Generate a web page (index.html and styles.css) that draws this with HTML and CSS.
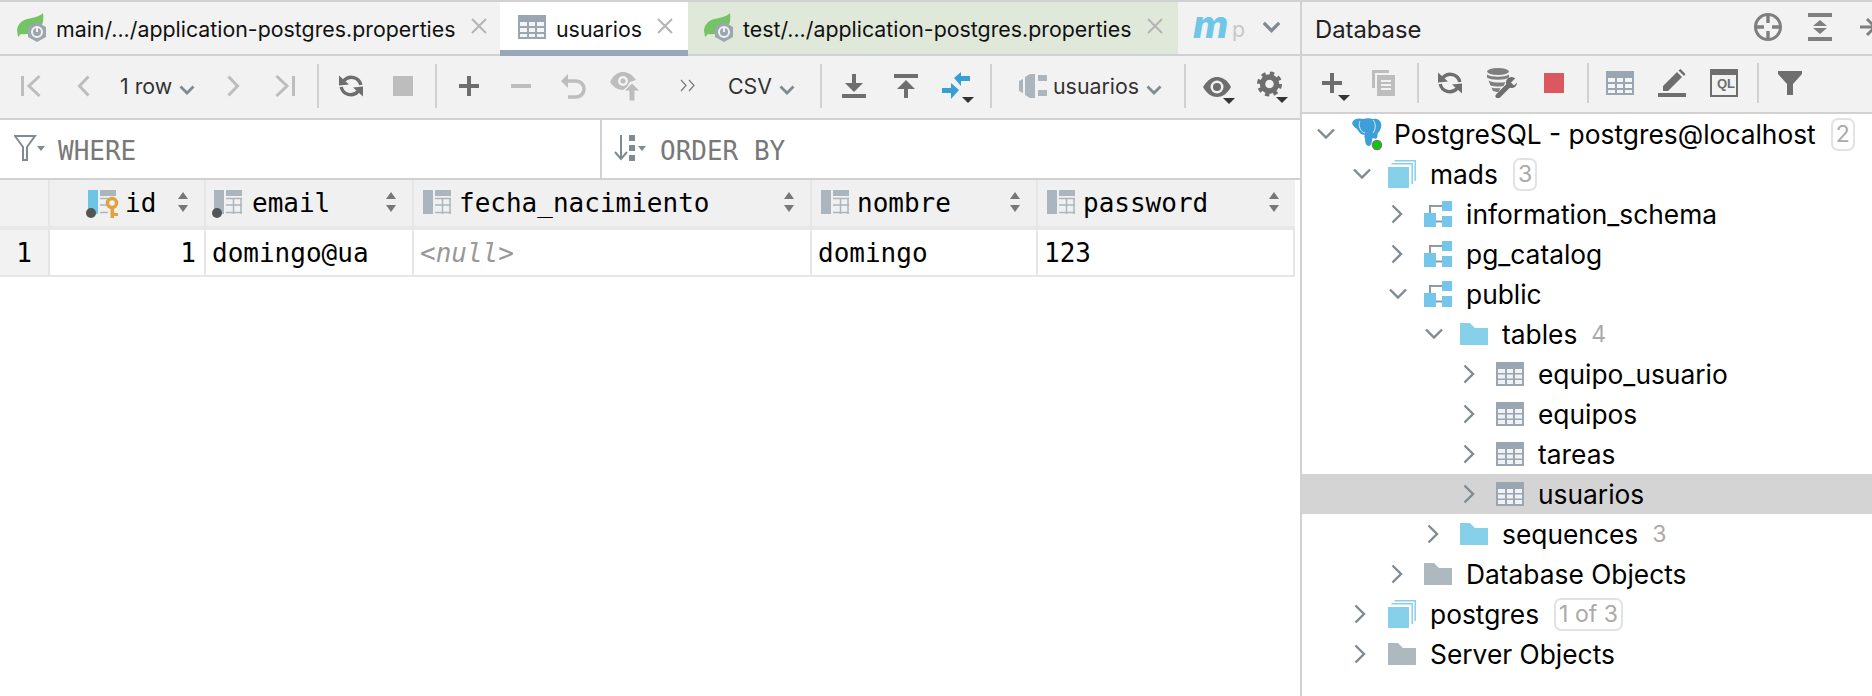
FILE: index.html
```html
<!DOCTYPE html>
<html lang="en">
<head>
<meta charset="utf-8">
<title>usuarios</title>
<link rel="stylesheet" href="styles.css">
</head>
<body>
<svg class="defs" xmlns="http://www.w3.org/2000/svg">
  <symbol id="spring" viewBox="0 0 30 28" overflow="visible">
    <path d="M0 17C1 8 9 6 15 5C19 4 23 3 26 0C27 7 26 13 21 17C15 21 8 22 4 21L1 24Z" fill="#74c365"/>
    <path d="M20 9l9 5v10l-9 5l-9-5V14z" fill="#9aa7b0"/>
    <circle cx="20" cy="19" r="5" fill="none" stroke="#f2f2f2" stroke-width="2"/>
    <path d="M20 14v5" stroke="#f2f2f2" stroke-width="2"/>
  </symbol>
  <symbol id="table" viewBox="0 0 28 24">
    <path d="M0 0h28v24H0z" fill="#9aa7b3"/>
    <path d="M2 7h7v4H2zM11 7h6v4h-6zM19 7h7v4h-7zM2 13h7v4H2zM11 13h6v4h-6zM19 13h7v4h-7zM2 19h7v3H2zM11 19h6v3h-6zM19 19h7v3h-7z" fill="#f4f4f4"/>
  </symbol>
  <symbol id="treetable" viewBox="0 0 28 24">
    <path d="M0 0h28v24H0z" fill="#9aa7b3"/>
    <path d="M2 7h7v4H2zM11 7h6v4h-6zM19 7h7v4h-7zM2 12.500h7v4H2zM11 12.500h6v4h-6zM19 12.500h7v4h-7zM2 18h7v4H2zM11 18h6v4h-6zM19 18h7v4h-7z" fill="#fff" fill-opacity=".85"/>
  </symbol>
  <symbol id="close" viewBox="0 0 16 16"><path d="M1 1l14 14M15 1L1 15" stroke="#b4b4b4" stroke-width="2" fill="none"/></symbol>
  <symbol id="chev-down" viewBox="0 0 16 10"><path d="M1.500 1.500L8 8l6.500-6.500" stroke="#7f8b91" stroke-width="2.800" fill="none"/></symbol>
  <symbol id="first" viewBox="0 0 20 24"><path d="M0 2h3v20H0z" fill="#bdbdbd"/><path d="M18.500 2L8 12l10.500 10" stroke="#bdbdbd" stroke-width="3" fill="none"/></symbol>
  <symbol id="prev" viewBox="0 0 13 22"><path d="M11.500 1.500L2.500 11l9 9.500" stroke="#bdbdbd" stroke-width="3" fill="none"/></symbol>
  <symbol id="next" viewBox="0 0 13 22"><path d="M1.500 1.500l9 9.500-9 9.500" stroke="#bdbdbd" stroke-width="3" fill="none"/></symbol>
  <symbol id="last" viewBox="0 0 20 24"><path d="M17 2h3v20h-3z" fill="#bdbdbd"/><path d="M1.500 2L12 12 1.500 22" stroke="#bdbdbd" stroke-width="3" fill="none"/></symbol>
  <symbol id="refresh" viewBox="0 0 24 24">
    <path d="M5 6.500A9.800 9.800 0 0 1 21.800 11M19 17.500A9.800 9.800 0 0 1 2.200 13" stroke="#6e6e6e" stroke-width="3.400" fill="none"/>
    <path d="M0 1.500L10 10.500 0 11.500zM24 22.500L14 13.500 24 12.500z" fill="#6e6e6e"/>
  </symbol>
  <symbol id="stop" viewBox="0 0 20 20"><path d="M0 0h20v20H0z" fill="#bdbdbd"/></symbol>
  <symbol id="plus" viewBox="0 0 20 20"><path d="M8 0h4v8h8v4h-8v8H8v-8H0V8h8z" fill="#6e6e6e"/></symbol>
  <symbol id="minus" viewBox="0 0 20 4"><path d="M0 0h20v4H0z" fill="#bdbdbd"/></symbol>
  <symbol id="undo" viewBox="0 0 26 26">
    <path d="M8 1L1 8l7 7z" fill="#bdbdbd"/>
    <path d="M7 8h9a8 8 0 0 1 0 16H8" stroke="#bdbdbd" stroke-width="3.600" fill="none"/>
  </symbol>
  <symbol id="eyeup" viewBox="0 0 30 30">
    <path d="M0 11C4 3 9 1 13 1s9 2 13 8l-6 2-3 5-4 3C8 19 3 16 0 11z" fill="#bdbdbd"/>
    <circle cx="13" cy="10" r="5" fill="#f2f2f2"/><circle cx="13" cy="10" r="2.500" fill="#bdbdbd"/>
    <path d="M22 12l8 8h-5v10h-6V20h-5z" fill="#bdbdbd" stroke="#f2f2f2"/>
  </symbol>
  <symbol id="more" viewBox="0 0 15 13"><path d="M1 1l5 5.500-5 5.500M9 1l5 5.500-5 5.500" stroke="#7a7a7a" stroke-width="1.200" fill="none"/></symbol>
  <symbol id="down" viewBox="0 0 24 24"><path d="M10 0h4v9h7l-9 9-9-9h7zM0 20h24v4H0z" fill="#6e6e6e"/></symbol>
  <symbol id="up" viewBox="0 0 24 24"><path d="M0 0h24v4H0zM12 6l9 9h-7v9h-4v-9H3z" fill="#6e6e6e"/></symbol>
  <symbol id="compare" viewBox="0 0 32 31">
    <path d="M12 6l7-6v4h9v5h-9v5z" fill="#389fd6"/>
    <path d="M17 18l-8 9v-6H0v-5h9v-5z" fill="#389fd6"/>
    <path d="M20 25h12l-6 6z" fill="#333"/>
  </symbol>
  <symbol id="plug" viewBox="0 0 28 26">
    <path d="M0 8l4-2v14l-4-2zM6 4l5-3h5v24h-5l-5-3z" fill="#aab5bd"/>
    <path d="M19 2h9v6h-9zM19 17h9v6h-9z" fill="#aab5bd"/>
  </symbol>
  <symbol id="eye" viewBox="0 0 34 27">
    <path d="M0 10C5 2 10 0 14 0s10 2 14 10c-4 7-9 10-14 10S4 17 0 10z" fill="#6e6e6e"/>
    <circle cx="14" cy="10" r="6.500" fill="#f2f2f2"/><circle cx="14" cy="10" r="4" fill="#6e6e6e"/>
    <path d="M20 21h12l-6 6z" fill="#333"/>
  </symbol>
  <symbol id="gear" viewBox="0 0 32 32">
    <circle cx="12.500" cy="13" r="7" fill="none" stroke="#6e6e6e" stroke-width="5.500"/>
    <circle cx="12.500" cy="13" r="10.500" fill="none" stroke="#6e6e6e" stroke-width="4" stroke-dasharray="4.250 4"/>
    <path d="M19 26h12l-6 6z" fill="#333"/>
  </symbol>
  <symbol id="funnel" viewBox="0 0 32 28">
    <path d="M1 1h20l-8 11v13H9V12z" fill="none" stroke="#7f8b91" stroke-width="2"/>
    <path d="M23 11h8l-4 5z" fill="#7f8b91"/>
  </symbol>
  <symbol id="sortrows" viewBox="0 0 32 28">
    <path d="M7 0v24M1 17l6 7 6-7" fill="none" stroke="#7f8b91" stroke-width="2"/>
    <path d="M15 0h6v6h-6zM15 10h6v6h-6zM15 20h6v6h-6z" fill="#7f8b91"/>
    <path d="M24 11h8l-4 5z" fill="#7f8b91"/>
  </symbol>
  <symbol id="sort" viewBox="0 0 10 20"><path d="M5 0l5 7H0zM5 20l-5-7h10z" fill="#777"/></symbol>
  <symbol id="col" viewBox="0 0 28 24">
    <path d="M0 0h10v24H0z" fill="#aab5bd"/>
    <path d="M12 0h16v6H12z" fill="#aab5bd"/>
    <path d="M12 8.500h16M12 15h16M12 22.500h16M19.500 8v16M27 8v16" stroke="#aab5bd" stroke-width="1.500" fill="none"/>
  </symbol>
  <symbol id="colfk" viewBox="0 0 30 28" overflow="visible">
    <path d="M2 0h10v24H2z" fill="#aab5bd"/>
    <path d="M14 0h16v6H14z" fill="#aab5bd"/>
    <path d="M14 8.500h16M14 15h16M14 22.500h16M21.500 8v16M29 8v16" stroke="#aab5bd" stroke-width="1.500" fill="none"/>
    <circle cx="5" cy="23" r="5" fill="#555"/>
  </symbol>
  <symbol id="colpk" viewBox="0 0 32 28" overflow="visible">
    <path d="M2 0h10v24H2z" fill="#6ec4e6"/>
    <path d="M14 0h16v6H14z" fill="#aab5bd"/>
    <path d="M14 8.500h8M14 15h8M14 22.500h8" stroke="#aab5bd" stroke-width="1.500" fill="none"/>
    <circle cx="5" cy="23" r="5" fill="#555"/>
    <circle cx="26" cy="14" r="4.500" fill="none" stroke="#e0a33c" stroke-width="3.500" transform="translate(0 -1)"/>
    <path d="M24.500 17h3.500v6h4v3h-4v2h-3.500z" fill="#e0a33c"/>
  </symbol>
  <symbol id="crosshair" viewBox="0 0 28 30">
    <circle cx="14" cy="15" r="12.500" fill="none" stroke="#7f7f7f" stroke-width="3"/>
    <path d="M14 3v8M14 19v8M2 15h8M18 15h8" stroke="#7f7f7f" stroke-width="3.400" fill="none"/>
  </symbol>
  <symbol id="expand" viewBox="0 0 24 28">
    <path d="M0 0h24v4H0zM0 24h24v4H0zM12 7l7 6H5zM12 21l-7-6h14z" fill="#7f7f7f"/>
  </symbol>
  <symbol id="collapse-side" viewBox="0 0 24 28" overflow="visible">
    <path d="M0 14h14M7 6l8 8-8 8M20 3v22" stroke="#7f7f7f" stroke-width="3" fill="none"/>
  </symbol>
  <symbol id="plusc" viewBox="0 0 28 28" overflow="visible">
    <path d="M8 0h4v8h8v4h-8v8H8v-8H0V8h8z" fill="#6e6e6e"/><path d="M16 22h12l-6 6z" fill="#333"/>
  </symbol>
  <symbol id="copy" viewBox="0 0 24 26">
    <path d="M0 0h17v3H3v15H0z" fill="#bdbdbd"/>
    <path d="M5 5h18v21H5z" fill="#bdbdbd"/>
    <path d="M9 10h10v2H9zM9 14h10v2H9zM9 18h10v2H9z" fill="#f2f2f2"/>
  </symbol>
  <symbol id="dbwrench" viewBox="0 0 30 30">
    <ellipse cx="11" cy="3.500" rx="11" ry="3.500" fill="#7f7f7f"/>
    <path d="M0 6.500c4 3 18 3 22 0v3c-4 3-18 3-22 0zM1.500 12.500c4 2.500 15 2.500 17 1.500l-2 4c-4 1-9 .5-13-.5zM4.500 19.500c3 1 6 1 9 .5l-2 4c-2 0-4-.5-5.500-1z" fill="#7f7f7f"/>
    <path d="M11 28L22 17" stroke="#6e6e6e" stroke-width="5" stroke-linecap="round"/>
    <circle cx="24.500" cy="14.500" r="5.500" fill="#6e6e6e"/>
    <path d="M24 14.500l5-5 3 3-5 5z" fill="#f2f2f2"/>
  </symbol>
  <symbol id="rstop" viewBox="0 0 20 20"><path d="M0 0h20v20H0z" fill="#db5860"/></symbol>
  <symbol id="pencil" viewBox="0 0 28 28">
    <path d="M5 17L19 3l5 5-14 14H5zM20.500 1.500l2-1.500 5 5-1.500 2z" fill="#6e6e6e"/><path d="M0 24h28v4H0z" fill="#6e6e6e"/>
  </symbol>
  <symbol id="qlbox" viewBox="0 0 28 28">
    <path d="M1 1h26v26H1z" fill="none" stroke="#6e6e6e" stroke-width="2"/><path d="M1 1h26v5H1z" fill="#6e6e6e"/>
  </symbol>
  <symbol id="filter" viewBox="0 0 24 24"><path d="M0 0h24v3l-9 10v11H9V13L0 3z" fill="#6e6e6e"/></symbol>
  <symbol id="chev-r" viewBox="0 0 12 20"><path d="M1.500 1.500L10 10l-8.500 8.500" stroke="#7f8b91" stroke-width="2.400" fill="none"/></symbol>
  <symbol id="chev-d" viewBox="0 0 18 12"><path d="M1 1.500l8 8 8-8" stroke="#7f8b91" stroke-width="2.400" fill="none"/></symbol>
  <symbol id="pg" viewBox="0 0 30 32" overflow="visible">
    <path d="M1 3C3 0 8 0 11 1c3-1 7-1 10 0 4-1 7 1 8 4 1 4-1 8-3 10-1 1 0 3-1 5-1 1-3 1-4 0l-1 1c0 4-1 7-3 7-3 0-4-3-4-8-1-1-1-2 0-3-4 0-6-3-8-6C1 8-1 6 1 3z" fill="#3d9fd8"/>
    <path d="M8 3c-2 4 0 11 5 12M21 2c3 3 3 9 0 13" stroke="#d6ecf8" stroke-width="1" fill="none"/>
    <circle cx="25" cy="27" r="4.500" fill="#00d000" stroke="#777" stroke-width="1.500"/>
  </symbol>
  <symbol id="dbstack" viewBox="0 0 28 28">
    <path d="M6.500 .8H27.200V21M3.500 3.800H24.200V24" fill="none" stroke="#87d0ea" stroke-width="1.500"/>
    <path d="M0 7h21v21H0z" fill="#87d0ea"/>
  </symbol>
  <symbol id="schema" viewBox="0 0 28 26">
    <path d="M6 12V5h12M12 20.500h6" stroke="#8f9aa3" stroke-width="2" fill="none"/>
    <path d="M18 0h10v10H18zM0 12h12v14H0zM18 15h10v11H18z" fill="#74c7ea"/>
  </symbol>
  <symbol id="folder" viewBox="0 0 28 22"><path d="M0 0h10l5 5h13v17H0z" fill="#87d0ea"/></symbol>
  <symbol id="gfolder" viewBox="0 0 28 22"><path d="M0 0h10l5 5h13v17H0z" fill="#aeb8bf"/></symbol>
</svg>

<div class="app">
  <main class="editor">
    <nav class="tabs">
      <div class="tab tab-main">
        <svg class="ic-spring"><use href="#spring"/></svg>
        <span class="tab-label">main/.../application-postgres.properties</span>
        <svg class="ic-close"><use href="#close"/></svg>
      </div>
      <div class="tab tab-active">
        <svg class="ic-tabtable"><use href="#table"/></svg>
        <span class="tab-label">usuarios</span>
        <svg class="ic-close"><use href="#close"/></svg>
      </div>
      <div class="tab tab-test">
        <svg class="ic-spring"><use href="#spring"/></svg>
        <span class="tab-label">test/.../application-postgres.properties</span>
        <svg class="ic-close"><use href="#close"/></svg>
      </div>
      <div class="tab tab-more">
        <span class="maven">m</span><span class="faded">p</span>
        <svg class="ic-tabchev"><use href="#chev-down"/></svg>
      </div>
    </nav>

    <div class="toolbar">
      <span class="btn"><svg class="w20"><use href="#first"/></svg></span>
      <span class="btn"><svg class="w13"><use href="#prev"/></svg></span>
      <span class="combo combo-rows">1 row<svg class="ic-chev"><use href="#chev-down"/></svg></span>
      <span class="btn"><svg class="w13"><use href="#next"/></svg></span>
      <span class="btn"><svg class="w20"><use href="#last"/></svg></span>
      <i class="sep"></i>
      <span class="btn"><svg class="w24"><use href="#refresh"/></svg></span>
      <span class="btn"><svg class="w20s"><use href="#stop"/></svg></span>
      <i class="sep"></i>
      <span class="btn"><svg class="w20s"><use href="#plus"/></svg></span>
      <span class="btn"><svg class="w20m"><use href="#minus"/></svg></span>
      <span class="btn"><svg class="w26"><use href="#undo"/></svg></span>
      <span class="btn"><svg class="w30"><use href="#eyeup"/></svg></span>
      <span class="btn btn-more"><svg class="w15"><use href="#more"/></svg></span>
      <span class="combo combo-csv">CSV<svg class="ic-chev"><use href="#chev-down"/></svg></span>
      <i class="sep"></i>
      <span class="btn"><svg class="w24"><use href="#down"/></svg></span>
      <span class="btn"><svg class="w24"><use href="#up"/></svg></span>
      <span class="btn"><svg class="w32c"><use href="#compare"/></svg></span>
      <i class="sep"></i>
      <span class="combo combo-table"><svg class="ic-plug"><use href="#plug"/></svg>usuarios<svg class="ic-chev"><use href="#chev-down"/></svg></span>
      <i class="sep"></i>
      <span class="btn btn-eye"><svg class="w34"><use href="#eye"/></svg></span>
      <span class="btn btn-gear"><svg class="w32"><use href="#gear"/></svg></span>
    </div>

    <div class="filters">
      <div class="filter-where"><svg class="ic-filter"><use href="#funnel"/></svg><span class="filter-text">WHERE</span></div>
      <div class="filter-order"><svg class="ic-filter"><use href="#sortrows"/></svg><span class="filter-text">ORDER BY</span></div>
    </div>

    <div class="grid">
      <div class="th th-gutter"></div>
      <div class="th th-id"><svg class="ic-pk"><use href="#colpk"/></svg><span class="th-name">id</span><svg class="ic-sort"><use href="#sort"/></svg></div>
      <div class="th th-fk"><svg class="ic-fk"><use href="#colfk"/></svg><span class="th-name">email</span><svg class="ic-sort"><use href="#sort"/></svg></div>
      <div class="th"><svg class="ic-col"><use href="#col"/></svg><span class="th-name">fecha_nacimiento</span><svg class="ic-sort"><use href="#sort"/></svg></div>
      <div class="th"><svg class="ic-col"><use href="#col"/></svg><span class="th-name">nombre</span><svg class="ic-sort"><use href="#sort"/></svg></div>
      <div class="th"><svg class="ic-col"><use href="#col"/></svg><span class="th-name">password</span><svg class="ic-sort"><use href="#sort"/></svg></div>
      <div class="td td-gutter">1</div>
      <div class="td td-num">1</div>
      <div class="td">domingo@ua</div>
      <div class="td td-null">&lt;null&gt;</div>
      <div class="td">domingo</div>
      <div class="td">123</div>
    </div>
  </main>

  <aside class="side">
    <header class="side-head">
      <span class="side-title">Database</span>
      <svg class="ic-cross"><use href="#crosshair"/></svg>
      <svg class="ic-expand"><use href="#expand"/></svg>
      <svg class="ic-cside"><use href="#collapse-side"/></svg>
    </header>
    <div class="side-tools">
      <span class="sbtn sbtn-plus"><svg class="w28"><use href="#plusc"/></svg></span>
      <span class="sbtn"><svg class="w24c"><use href="#copy"/></svg></span>
      <i class="sep"></i>
      <span class="sbtn"><svg class="w24"><use href="#refresh"/></svg></span>
      <span class="sbtn"><svg class="w30"><use href="#dbwrench"/></svg></span>
      <span class="sbtn"><svg class="w20s"><use href="#rstop"/></svg></span>
      <i class="sep"></i>
      <span class="sbtn"><svg class="w28t"><use href="#table"/></svg></span>
      <span class="sbtn"><svg class="w28"><use href="#pencil"/></svg></span>
      <span class="sbtn"><svg class="w28"><use href="#qlbox"/></svg><span class="ql-text">QL</span></span>
      <i class="sep"></i>
      <span class="sbtn"><svg class="w24"><use href="#filter"/></svg></span>
    </div>
    <ul class="tree">
      <li class="row l0"><svg class="ch-d"><use href="#chev-d"/></svg><svg class="ti ti-pg"><use href="#pg"/></svg><span>PostgreSQL - postgres@localhost</span><b class="badge">2</b></li>
      <li class="row l1"><svg class="ch-d"><use href="#chev-d"/></svg><svg class="ti ti-s"><use href="#dbstack"/></svg><span>mads</span><b class="badge">3</b></li>
      <li class="row l2"><svg class="ch-r"><use href="#chev-r"/></svg><svg class="ti ti-c"><use href="#schema"/></svg><span>information_schema</span></li>
      <li class="row l2"><svg class="ch-r"><use href="#chev-r"/></svg><svg class="ti ti-c"><use href="#schema"/></svg><span>pg_catalog</span></li>
      <li class="row l2"><svg class="ch-d"><use href="#chev-d"/></svg><svg class="ti ti-c"><use href="#schema"/></svg><span>public</span></li>
      <li class="row l3"><svg class="ch-d"><use href="#chev-d"/></svg><svg class="ti ti-f"><use href="#folder"/></svg><span>tables</span><b class="count">4</b></li>
      <li class="row l4"><svg class="ch-r"><use href="#chev-r"/></svg><svg class="ti ti-t"><use href="#treetable"/></svg><span>equipo_usuario</span></li>
      <li class="row l4"><svg class="ch-r"><use href="#chev-r"/></svg><svg class="ti ti-t"><use href="#treetable"/></svg><span>equipos</span></li>
      <li class="row l4"><svg class="ch-r"><use href="#chev-r"/></svg><svg class="ti ti-t"><use href="#treetable"/></svg><span>tareas</span></li>
      <li class="row l4 selected"><svg class="ch-r"><use href="#chev-r"/></svg><svg class="ti ti-t"><use href="#treetable"/></svg><span>usuarios</span></li>
      <li class="row l3"><svg class="ch-r"><use href="#chev-r"/></svg><svg class="ti ti-f"><use href="#folder"/></svg><span>sequences</span><b class="count">3</b></li>
      <li class="row l2"><svg class="ch-r"><use href="#chev-r"/></svg><svg class="ti ti-f"><use href="#gfolder"/></svg><span>Database Objects</span></li>
      <li class="row l0b"><svg class="ch-r"><use href="#chev-r"/></svg><svg class="ti ti-s"><use href="#dbstack"/></svg><span>postgres</span><b class="badge">1 of 3</b></li>
      <li class="row l0b"><svg class="ch-r"><use href="#chev-r"/></svg><svg class="ti ti-f"><use href="#gfolder"/></svg><span>Server Objects</span></li>
    </ul>
  </aside>
</div>
</body>
</html>
```

FILE: styles.css
```css
* { box-sizing: border-box; }
html, body { margin: 0; height: 100%; overflow: hidden; background: #fff; }
body { font-family: "Inter", "Liberation Sans", sans-serif; color: #000; }
svg { display: block; flex: none; overflow: visible; }
.defs { display: none; }

.app { display: flex; width: 1872px; height: 696px; border-top: 2px solid #d1d1d1; }
.editor { width: 1300px; flex: none; display: flex; flex-direction: column; }

/* tabs */
.tabs { display: flex; height: 54px; background: #f2f2f2; }
.tab { display: flex; align-items: center; height: 54px; padding-top: 1px; border-bottom: 2px solid #d1d1d1; font-size: 21.350px; color: #111; }
.tab-main { width: 500px; padding-left: 17px; }
.tab-active { width: 188px; padding-left: 18px; padding-top: 5px; background: #fff; border-bottom: 6px solid #9aa7b8; }
.tab-test { width: 490px; padding-left: 16px; background: #e0e9d9; }
.tab-more { flex: 1; padding-left: 15px; }
.tab-label { white-space: nowrap; }
.ic-spring { width: 30px; height: 28px; margin-right: 9px; margin-top: -4px; }
.ic-tabtable { width: 28px; height: 24px; margin-right: 10px; margin-top: -4px; }
.ic-close { width: 16px; height: 16px; margin-left: 15px; margin-top: -5px; }
.maven { font: italic 800 38px/1 "Inter", sans-serif; color: #6fc6e6; width: 39px; margin-top: -10px; }
.faded { font-size: 21.350px; color: #c8c8c8; width: 14px; }
.ic-tabchev { width: 19px; height: 12px; margin-left: 16px; margin-top: -3px; }

/* editor toolbar */
.toolbar { display: flex; align-items: center; height: 64px; padding: 0 0 2px 5px; background: #f2f2f2; border-bottom: 2px solid #d1d1d1; }
.btn { display: flex; align-items: center; justify-content: center; width: 52px; height: 44px; flex: none; }
.sep { display: block; flex: none; width: 2px; height: 44px; background: #d1d1d1; margin: 0 6px; }
.combo { display: flex; align-items: center; flex: none; font-size: 21.350px; color: #333; white-space: nowrap; }
.combo-rows { width: 98px; padding-left: 11px; }
.combo-csv { width: 104px; padding-left: 18px; }
.combo-table { width: 180px; padding-left: 21px; }
.btn-more { width: 60px; padding-left: 12px; margin-right: -1px; margin-top: -2px; }
.btn-eye { margin-left: 2px; }
.btn-gear { margin-left: 1px; }
.ic-chev { width: 16px; height: 10px; margin-left: 7px; margin-top: 8px; }
.ic-plug { width: 28px; height: 26px; margin-right: 6px; }
.w20 { width: 20px; height: 24px; }
.w13 { width: 13px; height: 22px; }
.w24 { width: 24px; height: 24px; }
.w20s { width: 20px; height: 20px; }
.w20m { width: 20px; height: 4px; }
.w26 { width: 26px; height: 26px; }
.w30 { width: 30px; height: 30px; }
.w15 { width: 15px; height: 13px; }
.w32c { width: 32px; height: 31px; margin-top: 2px; }
.w34 { width: 34px; height: 27px; margin-top: 8px; }
.w32 { width: 32px; height: 32px; margin-top: 2px; }
.w28 { width: 28px; height: 28px; }
.w28t { width: 28px; height: 24px; }
.w24c { width: 24px; height: 26px; }

/* filter */
.filters { display: flex; height: 60px; border-bottom: 2px solid #d1d1d1; font: 26px "DejaVu Sans Mono", monospace; color: #787878; }
.filter-where { display: flex; align-items: center; width: 602px; padding-left: 14px; border-right: 2px solid #d1d1d1; }
.filter-order { display: flex; align-items: center; flex: 1; padding-left: 12px; }
.filter-order .ic-filter { margin-right: 14px; }
.filter-text { margin-top: 4px; }
.ic-filter { width: 32px; height: 28px; margin-right: 12px; }

/* data grid */
.grid { display: grid; grid-template-columns: 48px 156px 208px 398px 226px 259px; grid-template-rows: 50px 47px; width: 1295px; font: 26px "DejaVu Sans Mono", monospace; color: #000; }
.th { display: flex; align-items: center; padding: 0 16px 0 9px; background: #f0f0f0; border-left: 2px solid #e6e6e6; border-bottom: 4px solid #e8e8e8; }
.th-gutter { background: #f2f2f2; border-left: 0; padding: 0; }
.th-id { padding-left: 36px; }
.th-fk { padding-left: 6px; }
.th-name { flex: 1; margin-left: 8px; white-space: nowrap; }
.ic-col { width: 28px; height: 24px; margin-top: -2px; }
.ic-fk { width: 30px; height: 28px; margin-top: 2px; }
.ic-pk { width: 32px; height: 28px; margin-top: 2px; }
.th-id .th-name { margin-left: 7px; }
.th-fk .th-name { margin-left: 10px; }
.ic-sort { width: 10px; height: 20px; margin-top: -2px; }
.td { display: flex; align-items: center; padding: 0 6px; background: #fff; border-left: 2px solid #e6e6e6; border-bottom: 2px solid #e6e6e6; white-space: nowrap; }
.td:last-child { border-right: 2px solid #e6e6e6; }
.td-gutter { background: #f2f2f2; border-left: 0; justify-content: center; padding: 0; }
.td-num { justify-content: flex-end; padding-right: 8px; }
.td-null { font-style: italic; color: #999; }

/* database panel */
.side { flex: 1; min-width: 0; border-left: 2px solid #d1d1d1; display: flex; flex-direction: column; overflow: hidden; }
.side-head { display: flex; align-items: center; height: 54px; padding-left: 13px; background: #f2f2f2; border-bottom: 2px solid #d1d1d1; }
.side-title { flex: none; font-size: 23.800px; color: #222; width: 439px; margin-top: 2px; }
.ic-cross { width: 28px; height: 30px; margin-top: -3px; }
.ic-expand { width: 24px; height: 28px; margin-left: 26px; margin-top: -3px; }
.ic-cside { width: 24px; height: 28px; margin-left: 28px; margin-top: -3px; }
.side-tools { display: flex; align-items: center; height: 58px; padding-bottom: 2px; padding-left: 6px; background: #f2f2f2; border-bottom: 2px solid #d1d1d1; }
.side-tools .sep { height: 40px; margin: 0 5px 0 7px; }
.sbtn { position: relative; display: flex; align-items: center; justify-content: center; width: 52px; height: 44px; flex: none; }
.sbtn-plus { padding-left: 6px; width: 50px; padding-top: 8px; }
.ql-text { position: absolute; left: 19px; top: 15px; font: 700 13px "Liberation Sans", sans-serif; color: #6e6e6e; }

/* tree */
.tree { list-style: none; margin: 0; padding: 0; font-size: 26.350px; }
.row { display: flex; align-items: center; height: 40px; white-space: nowrap; }
.l0 { padding-left: 15px; }
.l0b { padding-left: 50px; }
.l1 { padding-left: 51px; }
.l2 { padding-left: 87px; }
.l3 { padding-left: 123px; }
.l4 { padding-left: 159px; }
.selected { background: #d4d4d4; }
.ch-r { width: 12px; height: 20px; margin-left: 2px; margin-right: 21px; }
.ch-d { width: 18px; height: 12px; margin-right: 17px; }
.l0b .ch-r { margin-right: 22px; }
.ti { width: 28px; margin-right: 14px; flex: none; }
.ti-pg { width: 30px; height: 32px; margin-right: 12px; }
.ti-s { height: 28px; }
.ti-c { height: 26px; }
.ti-f { height: 22px; }
.ti-t { height: 24px; }
.badge { margin-left: 15px; padding: 0 3px; height: 33px; line-height: 29px; font-size: 23px; font-weight: 400; color: #aaa; border: 2px solid #e2e2e2; border-radius: 7px; }
.count { margin-left: 14px; font-size: 23px; font-weight: 400; color: #aaa; }
```
